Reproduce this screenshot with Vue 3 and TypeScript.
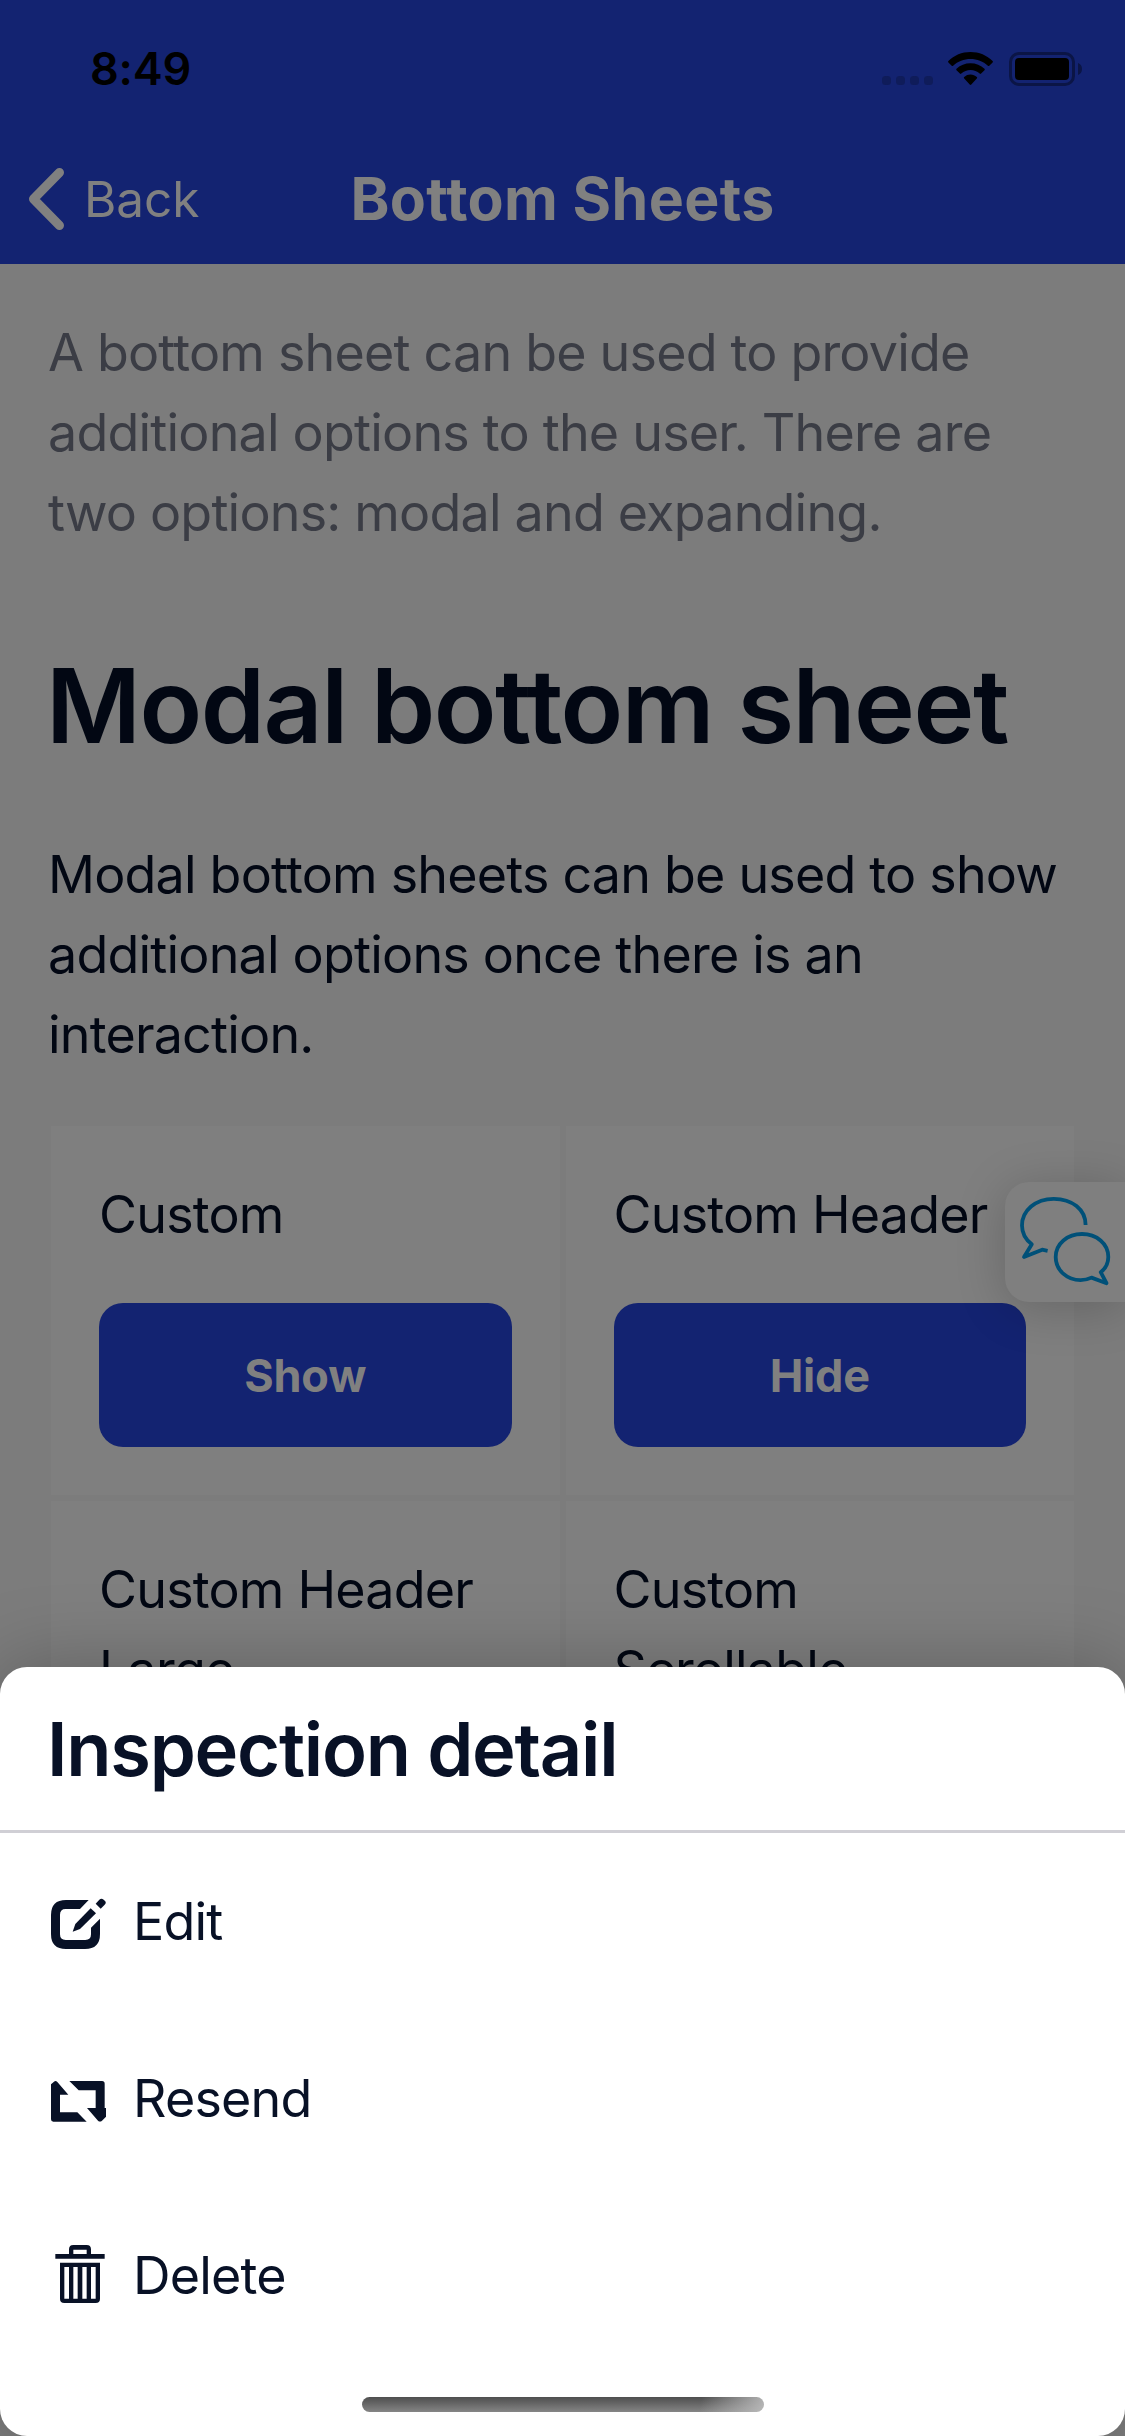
<script setup lang="ts">
interface Card {
  title: string
  action: string
}

interface SheetAction {
  id: 'edit' | 'resend' | 'delete'
  label: string
}

const cards: Card[] = [
  { title: 'Custom', action: 'Show' },
  { title: 'Custom Header', action: 'Hide' },
  { title: 'Custom Header Large', action: 'Show' },
  { title: 'Custom Scrollable', action: 'Show' },
]

const actions: SheetAction[] = [
  { id: 'edit', label: 'Edit' },
  { id: 'resend', label: 'Resend' },
  { id: 'delete', label: 'Delete' },
]
</script>

<template>
  <div class="screen">
    <header class="top">
      <div class="status">
        <span class="time">8:49</span>
        <div class="indicators">
          <span class="dots"><i v-for="n in 4" :key="n"></i></span>
          <svg class="wifi" viewBox="0 0 45 33" width="45" height="33">
            <path d="M22.5 0C31 0 39 3.3 44.6 9q.6.7 0 1.4l-3.300 3.300q-.7.6-1.400 0C35.200 9.400 29 7 22.500 7S9.800 9.400 5.100 13.700q-.7.6-1.400 0L.4 10.400q-.6-.7 0-1.400C6 3.300 14 0 22.500 0z" />
            <path d="M22.500 11.300c5.400 0 10.300 2 14 5.500q.7.700 0 1.400l-3.400 3.400q-.7.600-1.400 0a13.600 13.600 0 0 0-18.400 0q-.7.600-1.400 0l-3.400-3.400q-.7-.7 0-1.400a20.400 20.400 0 0 1 14-5.500z" />
            <path d="M22.500 22.600c2.400 0 4.600.9 6.300 2.400q.7.700 0 1.400l-5.500 6.100q-.8.800-1.600 0l-5.500-6.100q-.7-.7 0-1.400a9.400 9.400 0 0 1 6.300-2.400z" />
          </svg>
          <svg class="battery" viewBox="0 0 74 34" width="74" height="34">
            <rect x="1.500" y="1.500" width="63" height="31" rx="8.500" fill="none" stroke="#0b1546" stroke-width="3" />
            <rect x="6" y="6" width="54" height="22" rx="4" />
            <path d="M69 11c2.600 1 4 3.300 4 6s-1.400 5-4 6z" fill="#0b1546" />
          </svg>
        </div>
      </div>
      <nav class="nav">
        <div class="back">
          <svg viewBox="0 0 36 62" width="36" height="62">
            <path d="M31.500 4.500 5.500 31l26 26.500" fill="none" stroke="#808080" stroke-width="9" stroke-linecap="round" stroke-linejoin="round" />
          </svg>
          <span>Back</span>
        </div>
        <h1>Bottom Sheets</h1>
      </nav>
    </header>

    <main class="content">
      <p class="intro">
        A bottom sheet can be used to provide<br />additional options to the user. There are<br />two options: modal and expanding.
      </p>
      <h2>Modal bottom sheet</h2>
      <p class="lead">
        Modal bottom sheets can be used to show<br />additional options once there is an<br />interaction.
      </p>
      <div class="grid">
        <section v-for="card in cards" :key="card.title" class="card">
          <p>{{ card.title }}</p>
          <button type="button">{{ card.action }}</button>
        </section>
      </div>
    </main>

    <div class="chat">
      <svg viewBox="1005 1182 120 120" width="120" height="120">
        <path d="M1085.600 1225C1085.600 1209.500 1072 1198.800 1053.800 1198.800C1035.500 1198.800 1022 1210.500 1022 1225.500C1022 1233 1025.500 1239.500 1031.800 1244.300L1024 1257L1042.200 1249.700L1047.600 1250.800" />
        <path d="M1100.700 1272.200C1105.500 1268.500 1108.300 1263 1108.300 1257C1108.300 1243.500 1096.500 1234 1082 1234C1067.500 1234 1055.700 1243.500 1055.700 1257C1055.700 1270.500 1067.500 1280.200 1080.500 1280.200C1084.500 1280.200 1088 1279.300 1091.500 1277.600L1106.500 1283.200L1100.700 1272.200Z" />
      </svg>
    </div>

    <div class="sheet">
      <div class="sheet-head"><h3>Inspection detail</h3></div>
      <ul>
        <li v-for="item in actions" :key="item.id">
          <svg v-if="item.id === 'edit'" viewBox="63 72 165 165" width="55" height="55">
            <path d="M176 90H108Q63 90 63 135V192Q63 237 108 237H165Q210 237 210 192V146L183 173V193Q183 210 166 210H107Q90 210 90 193V134Q90 117 107 117H150Z" />
            <path d="M182 115 198 130 150 177 128 185 136 162Z" />
            <path d="M197 101 208 89Q214 83 221 89L225 93Q230 98 224 104L212 116Z" />
          </svg>
          <svg v-else-if="item.id === 'resend'" viewBox="63 63 165 165" width="55" height="55">
            <path d="M63 103 72 95Q77 91 82 96L115 134H90V187H142L170 215H70Q63 215 63 208Z" />
            <path d="M118 93H216Q224 93 224 101V174H228V200L216 212Q210 217 204 212L171 174H197V121H146Z" />
          </svg>
          <svg v-else viewBox="63 84 165 165" width="55" height="55">
            <path d="M76 102H117V88Q117 75 130 75H170Q183 75 183 88V102H224V116H76ZM130 89V102H170V89Z" fill-rule="evenodd" />
            <path d="M90 128H210V236Q210 249 197 249H103Q90 249 90 236ZM103 141V236H117V141ZM130 141V236H143V141ZM157 141V236H170V141ZM183 141V236H197V141Z" fill-rule="evenodd" />
          </svg>
          <span>{{ item.label }}</span>
        </li>
      </ul>
      <div class="home"></div>
    </div>
  </div>
</template>

<style>
body {
  margin: 0;
}
</style>

<style scoped>
.screen {
  position: relative;
  width: 1125px;
  height: 2436px;
  overflow: hidden;
  background: #7c7c7c;
  color: #020713;
  font-family: Inter, 'Liberation Sans', sans-serif;
  font-size: 52px;
  line-height: 80px;
  letter-spacing: -0.8px;
}
h1,
h2,
h3,
p,
ul {
  margin: 0;
  padding: 0;
}
.top {
  height: 264px;
  background: #132371;
}
.status {
  display: flex;
  justify-content: space-between;
  height: 133px;
  padding: 0 42px 0 90px;
  box-sizing: border-box;
  color: #000;
}
.time {
  margin-top: 29px;
  font-size: 45px;
  font-weight: 600;
  letter-spacing: -0.2px;
}
.indicators {
  display: flex;
  align-items: flex-start;
  padding-top: 52px;
}
.dots {
  display: flex;
  gap: 5px;
  padding-top: 24px;
  margin-right: 15px;
}
.dots i {
  width: 9px;
  height: 9px;
  border-radius: 3.5px;
  background: #0f1c5a;
}
.wifi {
  margin-right: 16px;
}
.nav {
  display: grid;
  grid-template-columns: 1fr auto 1fr;
  align-items: center;
  height: 132px;
  color: #808080;
}
.back {
  display: flex;
  align-items: center;
  gap: 20px;
  padding-left: 28px;
  font-size: 49.5px;
  letter-spacing: -0.1px;
}
.nav h1 {
  font-size: 59px;
  font-weight: 700;
  letter-spacing: 0.35px;
}
.content {
  padding: 49px 51px 0 48px;
}
.intro {
  color: #3b3d45;
  white-space: nowrap;
}
.content h2 {
  margin: 93px 0 0 -2px;
  font-size: 103px;
  font-weight: 600;
  line-height: 120px;
  letter-spacing: -1.5px;
  white-space: nowrap;
}
.lead {
  margin-top: 69px;
  white-space: nowrap;
}
.grid {
  display: grid;
  grid-template-columns: 1fr 1fr;
  gap: 6px;
  margin: 51px 0 0 3px;
}
.card {
  padding: 49px 48px 48px;
  background: #7f7f7f;
}
.card button {
  display: block;
  width: 100%;
  height: 144px;
  margin-top: 48px;
  border: 0;
  border-radius: 24px;
  background: #132371;
  color: #808080;
  font-family: inherit;
  font-size: 45px;
  font-weight: 700;
  letter-spacing: -0.2px;
}
.chat {
  position: absolute;
  top: 1182px;
  right: 0;
  width: 120px;
  height: 120px;
  border-radius: 24px 0 0 24px;
  background: #7f7f7f;
  box-shadow: 0 6px 50px rgba(0, 0, 0, 0.2);
}
.chat svg {
  display: block;
  fill: none;
  stroke: #005078;
  stroke-width: 3.8;
  stroke-linejoin: round;
}
.sheet {
  position: absolute;
  left: 0;
  right: 0;
  bottom: 0;
  height: 769px;
  border-radius: 27px;
  background: #fff;
  color: #081126;
  box-shadow: 0 0 80px rgba(0, 0, 0, 0.25);
}
.sheet-head {
  display: flex;
  align-items: center;
  height: 163px;
  padding-left: 47px;
  border-bottom: 3px solid #d0cfd5;
}
.sheet-head h3 {
  font-size: 74px;
  font-weight: 600;
  letter-spacing: -1.25px;
}
.sheet ul {
  list-style: none;
}
.sheet li {
  display: flex;
  align-items: center;
  gap: 27px;
  height: 177px;
  padding-left: 51px;
}
.sheet li svg {
  overflow: visible;
  fill: #081126;
}
.home {
  width: 402px;
  height: 15px;
  margin: 33px auto 0;
  border-radius: 8px;
  background:
    linear-gradient(100deg, rgba(190, 190, 190, 0) 84%, rgba(190, 190, 190, 0.9) 100%),
    linear-gradient(#4e4e4e, #858585);
}
</style>
